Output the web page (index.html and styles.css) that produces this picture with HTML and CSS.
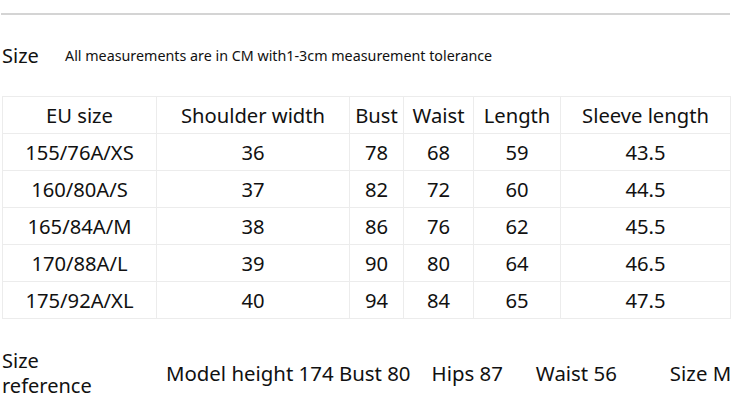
FILE: index.html
```html
<!DOCTYPE html>
<html>
<head>
<meta charset="utf-8">
<link rel="stylesheet" href="styles.css">
</head>
<body>
<div class="page">
  <div class="rule"></div>
  <div class="title-row">
    <span class="title">Size</span>
    <span class="note">All measurements are in CM with1-3cm measurement tolerance</span>
  </div>
  <table class="sizes">
    <colgroup>
      <col class="c1"><col class="c2"><col class="c3"><col class="c4"><col class="c5"><col class="c6">
    </colgroup>
    <tr><td>EU size</td><td>Shoulder width</td><td>Bust</td><td>Waist</td><td>Length</td><td>Sleeve length</td></tr>
    <tr><td>155/76A/XS</td><td>36</td><td>78</td><td>68</td><td>59</td><td>43.5</td></tr>
    <tr><td>160/80A/S</td><td>37</td><td>82</td><td>72</td><td>60</td><td>44.5</td></tr>
    <tr><td>165/84A/M</td><td>38</td><td>86</td><td>76</td><td>62</td><td>45.5</td></tr>
    <tr><td>170/88A/L</td><td>39</td><td>90</td><td>80</td><td>64</td><td>46.5</td></tr>
    <tr><td>175/92A/XL</td><td>40</td><td>94</td><td>84</td><td>65</td><td>47.5</td></tr>
  </table>
  <div class="ref-row">
    <div class="ref-label"><div>Size</div><div>reference</div></div>
    <span class="m1">Model height 174 Bust 80</span>
    <span class="m2">Hips 87</span>
    <span class="m3">Waist 56</span>
    <span class="m4">Size M</span>
  </div>
</div>
</body>
</html>
```
FILE: styles.css
```css
html, body {
  margin: 0;
  padding: 0;
  background: #fff;
}
body {
  font-family: "Noto Sans", "Open Sans", sans-serif;
  color: #111;
  width: 732px;
  height: 417px;
  overflow: hidden;
}
.page {
  padding-top: 13px;
}
.rule {
  margin-left: 1px;
  width: 729px;
  height: 2px;
  background: #d4d4d4;
}
.title-row {
  display: flex;
  align-items: center;
  height: 40px;
  margin-top: 20px;
  padding-left: 2px;
}
.title {
  font-size: 20px;
  width: 63px;
}
.note {
  font-size: 14.3px;
}
.sizes {
  margin-top: 21px;
  margin-left: 2px;
  width: 728px;
  border-collapse: collapse;
  table-layout: fixed;
}
.sizes td {
  border: 1px solid #ececec;
  height: 36px;
  padding: 0;
  text-align: center;
  font-size: 20.2px;
  line-height: 24px;
}
.c1 { width: 154px; }
.c2 { width: 193px; }
.c3 { width: 54px; }
.c4 { width: 70px; }
.c5 { width: 87px; }
.c6 { width: 170px; }
.ref-row {
  display: flex;
  align-items: center;
  margin-top: 29px;
  padding-left: 2px;
  font-size: 20.4px;
  white-space: nowrap;
}
.ref-label {
  width: 164px;
  font-size: 20px;
  line-height: 25px;
}
.m2 { margin-left: 21px; }
.m3 { margin-left: 33px; }
.m4 { margin-left: 53px; }
```
